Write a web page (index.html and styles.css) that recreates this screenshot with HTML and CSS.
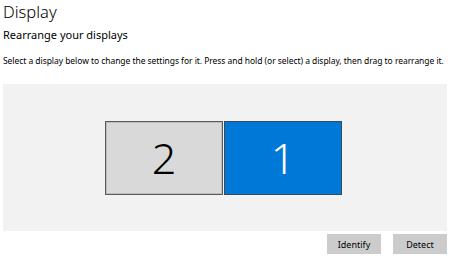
FILE: index.html
```html
<!DOCTYPE html>
<html lang="en">
<head>
    <meta charset="UTF-8">
    <title>Display</title>
    <link rel="stylesheet" href="styles.css">
</head>
<body>
    <div class="page">
        <h1 class="title">Display</h1>
        <h2 class="subtitle">Rearrange your displays</h2>
        <p class="hint">Select a display below to change the settings for it. Press and hold (or select) a display, then drag to rearrange it.</p>

        <!-- monitor arrangement area -->
        <div class="arrange">
            <div class="monitor secondary">2</div>
            <div class="monitor primary">1</div>
        </div>

        <div class="actions">
            <button class="btn">Identify</button>
            <button class="btn">Detect</button>
        </div>
    </div>
</body>
</html>
```

FILE: styles.css
```css
body {
    margin: 0;
    padding: 0;
    background-color: #ffffff;
    color: #000;
    font-family: 'Noto Sans', 'Open Sans', sans-serif;
}
.page {
    width: 444px;
    padding: 0 0 0 3px;
}
.title {
    margin: 0;
    font-size: 16.5px;
    font-weight: 300;
    line-height: 23px;
}
.subtitle {
    margin: 5px 0 0 0;
    font-size: 11px;
    font-weight: 400;
    line-height: 14px;
}
.hint {
    margin: 13px 0 0 0;
    font-size: 8.5px;
    line-height: 12px;
    white-space: nowrap;
    letter-spacing: -0.05px;
}
.arrange {
    margin-top: 17px;
    height: 147px;
    padding-right: 3px;
    background-color: #f2f2f2;
    display: flex;
    justify-content: center;
    align-items: center;
    gap: 1px;
}
.monitor {
    width: 116px;
    height: 72px;
    display: flex;
    justify-content: center;
    align-items: center;
    font-size: 43px;
    font-weight: 300;
}
.monitor.secondary {
    background-color: #d9d9d9;
    border: 1px solid #5a5a5a;
    box-shadow: inset 0 0 0 1px #bdbdbd;
    color: #000;
}
.monitor.primary {
    background-color: #0078d7;
    border: 1px solid #3c4a56;
    color: #fff;
}
.actions {
    display: flex;
    justify-content: flex-end;
    gap: 12px;
    margin-top: 3px;
}
.btn {
    width: 54px;
    height: 20px;
    padding: 0;
    border: none;
    background-color: #cccccc;
    color: #000;
    font-family: 'Noto Sans', 'Open Sans', sans-serif;
    font-size: 9px;
}
```
